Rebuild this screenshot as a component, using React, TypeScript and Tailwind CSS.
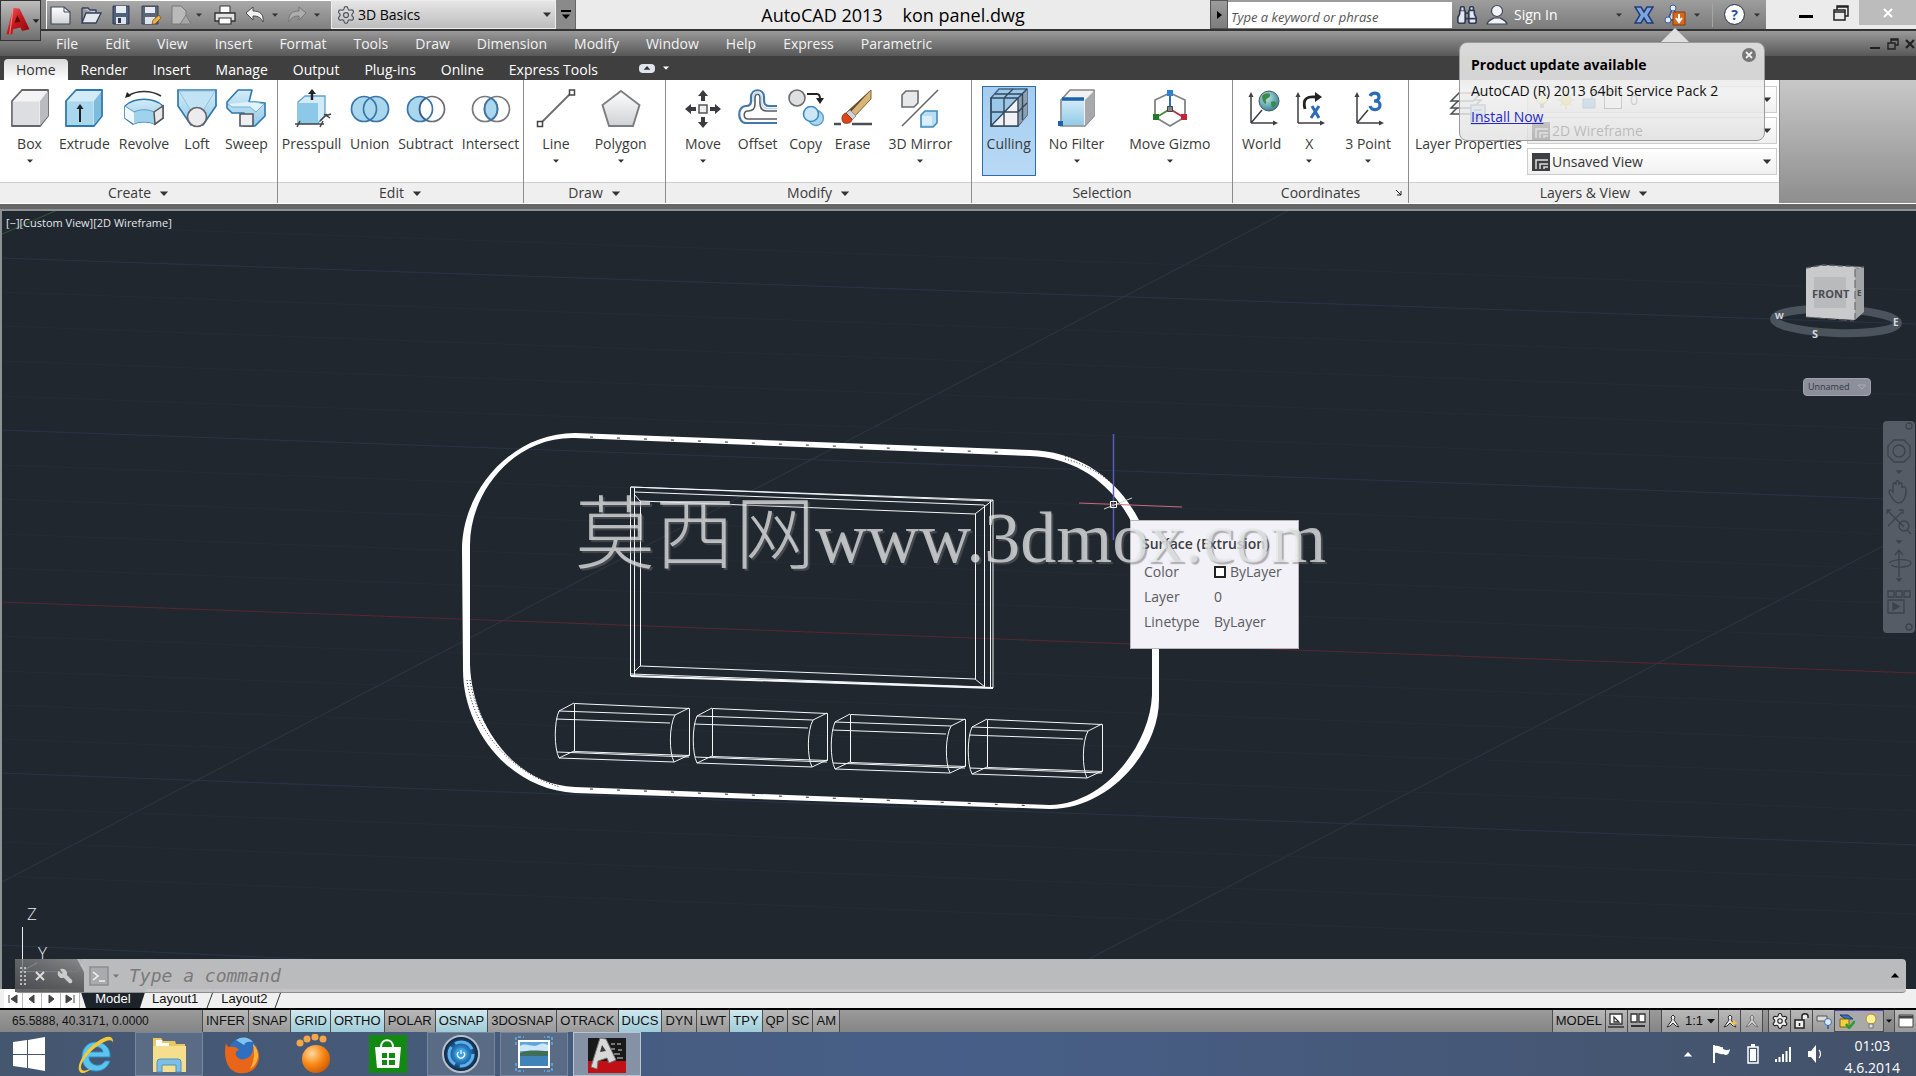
import React from "react";
import { Binoculars, Settings, Wrench } from "lucide-react";

type IconProps = { children: React.ReactNode; size?: string; box?: string };

function Svg({ children, size = "size-10", box = "0 0 40 40" }: IconProps) {
  return (
    <svg viewBox={box} className={`${size} shrink-0`} fill="none" aria-hidden="true">
      {children}
    </svg>
  );
}

function SharedGradients() {
  return (
    <svg className="absolute size-0" aria-hidden="true">
      <defs>
        <linearGradient id="gray" x1="0" y1="0" x2="0" y2="1">
          <stop offset="0" stopColor="#ffffff" />
          <stop offset="1" stopColor="#cfd1d4" />
        </linearGradient>
        <linearGradient id="blue" x1="0" y1="0" x2="0" y2="1">
          <stop offset="0" stopColor="#d3ebf7" />
          <stop offset="1" stopColor="#93cbe8" />
        </linearGradient>
        <linearGradient id="red" x1="0" y1="0" x2="1" y2="1">
          <stop offset="0" stopColor="#f0686a" />
          <stop offset="0.5" stopColor="#c6161c" />
          <stop offset="1" stopColor="#7d0b0e" />
        </linearGradient>
        <radialGradient id="globe" cx="0.4" cy="0.35" r="0.7">
          <stop offset="0" stopColor="#bfe6e4" />
          <stop offset="1" stopColor="#2f7f92" />
        </radialGradient>
        <radialGradient id="orange" cx="0.35" cy="0.3" r="0.8">
          <stop offset="0" stopColor="#ffd9a0" />
          <stop offset="0.5" stopColor="#f98a17" />
          <stop offset="1" stopColor="#c95300" />
        </radialGradient>
        <radialGradient id="lens" cx="0.5" cy="0.5" r="0.5">
          <stop offset="0" stopColor="#4cc0ff" />
          <stop offset="0.6" stopColor="#1c5f9e" />
          <stop offset="1" stopColor="#0b1c30" />
        </radialGradient>
      </defs>
    </svg>
  );
}

function Down({ className = "" }: { className?: string }) {
  return (
    <svg viewBox="0 0 10 6" className={`shrink-0 fill-current ${className}`} aria-hidden="true">
      <path d="M0 0.5h10L5 6z" />
    </svg>
  );
}

/* ---------- ribbon icons ---------- */

const axes = (
  <g stroke="#3c3f43" strokeWidth="1.5">
    <path d="M9 35V6M9 35h25M9 35 20 22" />
    <path d="M6.500 9 9 4l2.500 5zM31 32.500 36 35l-5 2.500z" fill="#3c3f43" stroke="none" />
  </g>
);

const icons = {
  box: (
    <Svg>
      <path d="M2 13 12 2h26v26L30 38H2z" fill="#f4f4f5" stroke="#63656a" strokeWidth="1.800" strokeLinejoin="round" />
      <path d="M2.800 13.500H29.500V37H2.800z" fill="#dddee2" />
      <path d="M30 13 38 3v25l-8 9.500z" fill="#b9bbc1" />
    </Svg>
  ),
  extrude: (
    <Svg>
      <path d="M2 13 12 2h26v26L30 38H2z" fill="#d3ebf7" stroke="#2d78ad" strokeWidth="1.800" strokeLinejoin="round" />
      <path d="M3 13.500h26.500V37H3z" fill="#a9d7ee" />
      <path d="M30 13 37 4v24l-7 8.500z" fill="#7fbbdc" />
      <path d="M16 34V18" stroke="#222" strokeWidth="2" />
      <path d="m12.500 21 3.500-5 3.500 5z" fill="#222" />
    </Svg>
  ),
  revolve: (
    <Svg>
      <path d="M4 8C13 2 27 2 37 8" stroke="#333" strokeWidth="1.600" />
      <path d="M1 10 3 4l4 4z" fill="#222" />
      <path d="M1 18C10 9 30 9 39 18v12l-8 6c-6-3-16-3-22 0l-8-6z" fill="url(#blue)" stroke="#2d78ad" strokeWidth="1.500" />
      <path d="M1 18l9 6c6-3 14-3 20 0v12c-6-3-14-3-20 0V24z" fill="#9fd2ec" />
      <path d="M1 18l9 6v12l-9-6z" fill="#f1f8fc" />
      <path d="M1 18l9 6c6-3 14-3 20 0" stroke="#5b9cc6" />
      <path d="m30 24 9-6v12l-8 6z" fill="#e9e9eb" stroke="#555" strokeWidth="1.500" />
    </Svg>
  ),
  loft: (
    <Svg>
      <path d="M1 2h38v16L26 37H14L1 18z" fill="url(#blue)" stroke="#2d78ad" strokeWidth="1.700" />
      <path d="m2 3 12 20h12L38 3z" fill="#c2e3f3" stroke="#8fc3df" />
      <circle cx="20" cy="29" r="9.500" fill="#ececee" stroke="#63656a" strokeWidth="1.700" />
    </Svg>
  ),
  sweep: (
    <Svg>
      <path d="M1 14 12 2h14l-3 12h6l10 1v13l-10 10H18V25H6l-5-5z" fill="url(#blue)" stroke="#2d78ad" strokeWidth="1.600" strokeLinejoin="round" />
      <path d="m2 16 4 3h18l6 5 8-8-8-2h-7" fill="#e1f2fa" stroke="#6fb2d6" />
      <path d="M14 26h13v12H14z" fill="#efeff1" stroke="#55575b" strokeWidth="1.600" />
    </Svg>
  ),
  presspull: (
    <Svg>
      <path d="M6 14 13 8h20v20l-7 7H6z" fill="#d3ebf7" stroke="#5fa3cb" strokeWidth="1.300" />
      <path d="M6 15h20v20H6z" fill="#8cc8e7" />
      <path d="M20 12V4" stroke="#222" strokeWidth="2.500" />
      <path d="m16 6 4-5 4 5z" fill="#222" />
      <path d="M3 36h29M5 39l3-6M28 39l3-6M28 33l7-7M33 28l6-2M32 26l6 4" stroke="#444" strokeWidth="1.500" />
    </Svg>
  ),
  union: (
    <Svg>
      <circle cx="14" cy="21" r="12.500" fill="#a9d7ee" />
      <circle cx="26" cy="21" r="12.500" fill="#a9d7ee" />
      <g stroke="#3b76ab" strokeWidth="1.700"><circle cx="14" cy="21" r="12.500" /><circle cx="26" cy="21" r="12.500" /></g>
    </Svg>
  ),
  subtract: (
    <Svg>
      <circle cx="26" cy="21" r="12.500" fill="#fff" stroke="#6b6d72" strokeWidth="1.700" />
      <path d="M20 10a12.500 12.500 0 1 0 0 22 12.500 12.500 0 0 1 0-22" fill="#a9d7ee" />
      <circle cx="14" cy="21" r="12.500" stroke="#3b76ab" strokeWidth="1.700" />
      <path d="M20 10a12.500 12.500 0 0 0 0 22" stroke="#3b5f8b" strokeWidth="1.700" />
    </Svg>
  ),
  intersect: (
    <Svg>
      <path d="M20 10a12.500 12.500 0 0 1 0 22 12.500 12.500 0 0 1 0-22" fill="#a9d7ee" />
      <g stroke="#77797d" strokeWidth="1.700"><circle cx="14" cy="21" r="12.500" /><circle cx="26" cy="21" r="12.500" /></g>
      <path d="M20 10a12.500 12.500 0 0 1 0 22 12.500 12.500 0 0 1 0-22" stroke="#3b76ab" strokeWidth="1.700" />
    </Svg>
  ),
  line: (
    <Svg>
      <path d="M4 36 35 5" stroke="#6a6c70" strokeWidth="1.800" />
      <path d="M1.500 33.500h5v5h-5zM33.500 2h5v5h-5z" fill="#fff" stroke="#444" strokeWidth="1.500" />
    </Svg>
  ),
  polygon: (
    <Svg><path d="M20 3 38.500 17 32 38H8L1.500 17z" fill="url(#gray)" stroke="#7b7d81" strokeWidth="1.900" /></Svg>
  ),
  move: (
    <Svg>
      <path d="M16 17h8v8h-8z" fill="#eee" stroke="#555" strokeWidth="1.500" />
      <path d="m20 2-5 6h3v5h4V8h3zM20 40l-5-6h3v-5h4v5h3zM2 21l6-5v3h5v4H8v3zM38 21l-6-5v3h-5v4h5v3z" fill="#3a3c40" />
    </Svg>
  ),
  offset: (
    <Svg>
      <path d="M39 18h-8c-4 0-5-2-5-6V9c0-9-13-9-13 0v4c0 4-2 5-5 5-9 0-9 17 0 17h31" stroke="#4577a8" strokeWidth="2.200" />
      <path d="M39 23H29c-5 0-7-3-7-8V10c0-5-5-5-5 0v6c0 5-3 7-7 7-5 0-5 8 0 8h29" stroke="#5a5c60" strokeWidth="1.600" />
      <path d="M39 20.500h-9c-5 0-6.500-3-6.500-7V10c0-7-8.500-7-8.500 0v4" stroke="#bcdcf1" strokeWidth="1.500" />
    </Svg>
  ),
  copy: (
    <Svg>
      <circle cx="11" cy="10" r="8" fill="#dedfe1" stroke="#6a6c70" strokeWidth="1.600" />
      <path d="M21 6h10q3 0 3 5" stroke="#222" strokeWidth="2" />
      <path d="m30 10 8 0-4 6z" fill="#222" />
      <circle cx="30" cy="30" r="7.500" fill="#a9d7ee" stroke="#5b9bc9" strokeWidth="1.300" />
      <circle cx="25" cy="26" r="7.500" fill="#cbe7f5" stroke="#3f8ac1" strokeWidth="1.600" />
    </Svg>
  ),
  erase: (
    <Svg>
      <path d="M38 2v9L19 31l-6-6z" fill="#d9b678" stroke="#7d6237" />
      <path d="M38 2 13 25l2 2z" fill="#5f4a2a" />
      <path d="m17 22 6 6-4 4-6-7z" fill="#cfd2d6" stroke="#77797d" strokeWidth="0.700" />
      <path d="M13 25c-5 1-5 8-2 10 4 1 8 0 8-4z" fill="#d9481c" stroke="#872706" strokeWidth="0.800" />
      <path d="M1 36h7M19 36h20" stroke="#4d4f53" strokeWidth="2.400" />
    </Svg>
  ),
  mirror: (
    <Svg>
      <path d="m2 7 4-4h12v12l-4 4H2z" fill="#e7e8ea" stroke="#6a6c70" strokeWidth="1.600" />
      <path d="M2 38 38 2" stroke="#66686c" strokeWidth="1.600" />
      <path d="m21 27 4-4h12v12l-4 4H21z" fill="#b9def2" stroke="#3f8ac1" strokeWidth="1.600" />
      <path d="M22 28h10v9H22z" fill="#dbeffa" />
    </Svg>
  ),
  culling: (
    <Svg>
      <path d="M2 10 10 1h28v26l-9 11H2z" fill="#9ac8e6" stroke="#44627f" strokeWidth="1.500" />
      <path d="M2 38 29 10v28z" fill="#f2f2f4" />
      <path d="M29 10 38 1v26l-9 11z" fill="#8ea0b0" />
      <path d="M2 10h27v28H2zM15 10v28M2 24h27M29 10l9-9M15 10l9-9M6 6h28M33.500 6v26M29 24l9-9M2 38l27-28" stroke="#33485d" strokeWidth="1.400" />
    </Svg>
  ),
  filter: (
    <Svg>
      <path d="M4 12 13 2h24v26l-9 10H4z" fill="#f2f2f3" stroke="#85878b" strokeWidth="1.600" />
      <path d="m28 12 9-9v25l-9 10z" fill="#a7a9ad" />
      <path d="M5 12h22v25H5z" fill="url(#blue)" />
      <path d="M5 11h22" stroke="#1d62ad" strokeWidth="3.500" />
      <path d="M1 33h5v5H1z" fill="#1d62ad" />
    </Svg>
  ),
  gizmo: (
    <Svg>
      <path d="M20 5 35 12v17l-15 9L5 29V12z" stroke="#808286" strokeWidth="1.800" />
      <path d="M20 6v15" stroke="#2a6db5" strokeWidth="2" />
      <path d="M20 21 7 29" stroke="#4a8a3c" strokeWidth="2" />
      <path d="m20 21 13 8" stroke="#b9303c" strokeWidth="2" />
      <path d="M17.500 18.500h5v5h-5z" fill="#888" stroke="#444" />
      <path d="M17 2h6v6h-6z" fill="#2f80cf" /><path d="M3 26h6v6H3z" fill="#1f7a2a" /><path d="M31 26h6v6h-6z" fill="#c4243a" />
    </Svg>
  ),
  world: (
    <Svg>
      {axes}
      <circle cx="27" cy="13" r="10" fill="url(#globe)" stroke="#4c5b63" />
      <path d="M20 8c4-4 9-3 8 0s-5 2-4 6-4 1-4-6M29 14c4-2 7 0 4 4s-4-1-4-4" fill="#3c8a4a" />
    </Svg>
  ),
  x: (
    <Svg>
      <g stroke="#3c3f43" strokeWidth="1.500"><path d="M9 35V6M9 35h25" /><path d="M6.500 9 9 4l2.500 5zM31 32.500 36 35l-5 2.500z" fill="#3c3f43" stroke="none" /></g>
      <path d="M16 21c-3-11 3-13 11-12" stroke="#222" strokeWidth="2.800" />
      <path d="m26 4 7 5-7 5z" fill="#222" />
      <path d="m23 18 7 12M30 18l-8 12" stroke="#2a6db5" strokeWidth="3" />
    </Svg>
  ),
  point3: (
    <Svg>
      {axes}
      <path d="M22 8c2-4 9-4 9 1 0 4-4 4-5 4 2 0 6 0 6 4 0 6-9 6-10 1" stroke="#2a6db5" strokeWidth="3.200" />
    </Svg>
  ),
  layers: (
    <Svg>
      <g fill="#f4f4f5" stroke="#4d4f53" strokeWidth="1.500">
        <path d="m2 26 8-8h22l-8 8z" /><path d="m2 20 8-8h22l-8 8z" /><path d="m2 13 8-8h22l-8 8z" />
      </g>
      <path d="M22 17h14v19H22z" fill="#cfe0ee" stroke="#4577a8" strokeWidth="1.500" />
      <path d="M25 22h8M25 26h8M25 30h8" stroke="#4577a8" strokeWidth="1.500" />
    </Svg>
  ),
};

/* ---------- quick access ---------- */

const qat = {
  new: <Svg size="size-[22px]" box="0 0 22 22"><path d="M1 3h13l6 5v12H1z" fill="url(#gray)" stroke="#3f4b5c" strokeWidth="1.200" /><path d="M14 3v5h6" stroke="#3f4b5c" /></Svg>,
  open: <Svg size="size-[22px]" box="0 0 22 22"><path d="M2 4h6l2 2h6v4" fill="#c7ccd6" stroke="#34415a" strokeWidth="1.300" /><path d="M2 19V4M2 19 6 9h15l-5 10z" fill="#e5e8ee" stroke="#34415a" strokeWidth="1.300" /></Svg>,
  save: <Svg size="size-[22px]" box="0 0 22 22"><path d="M3 2h16v18H3z" fill="#4f5f7c" stroke="#2d3950" /><path d="M6 2h10v7H6z" fill="#e8ebf1" /><path d="M6 13h10v7H6z" fill="#dfe3ea" /><path d="M8 14h3v5H8z" fill="#2d3950" /></Svg>,
  saveAs: <Svg size="size-[22px]" box="0 0 22 22"><path d="M2 2h16v18H2z" fill="#5b6578" stroke="#3a4150" /><path d="M5 3h10v6H5z" fill="#e8ebf1" /><path d="M5 13h10v7H5z" fill="#dfe3ea" /><path d="m12 20 1-4 6-5 2 3-6 6z" fill="#eab04a" stroke="#7b531a" strokeWidth="0.800" /></Svg>,
  page: <Svg size="size-[22px]" box="0 0 22 22"><path d="M2 2h9l5 5v13H2z" fill="#b9b9b9" stroke="#787878" /><path d="m10 20 6-9 5 9z" fill="#a7a7a7" stroke="#7c7c7c" /></Svg>,
  print: <Svg size="size-[22px]" box="0 0 22 22"><path d="M6 2h10v7H6z" fill="#fff" stroke="#333" /><path d="M1 9h20v8H1z" fill="#e3e3e3" stroke="#333" strokeWidth="1.400" /><path d="M5 14h12v6H5z" fill="#fff" stroke="#333" strokeWidth="1.200" /></Svg>,
  undo: <Svg size="size-[22px]" box="0 0 22 22"><path d="m2 9 7-6v4c7 0 11 3 10 11-2-4-4-6-10-6v4z" fill="#f1f1f1" stroke="#4a4a4a" /></Svg>,
  redo: <Svg size="size-[22px]" box="0 0 22 22"><path d="m20 9-7-6v4C6 7 2 10 3 18c2-4 4-6 10-6v4z" fill="#adadad" stroke="#777" /></Svg>,
};

function TitleBar() {
  return (
    <header className="relative flex h-[31px] items-stretch border-b-2 border-[#333] bg-[#ebebeb]">
      <button aria-label="Application menu" className="absolute left-0 top-0 z-10 flex h-[41px] w-[41px] items-center border border-[#333] bg-linear-to-b from-[#bdbdbd] to-[#6f6f6f] pl-[3px] text-[#222]">
        <Svg size="size-7" box="0 0 30 34">
          <path d="M1 33 9 1l8 1 12 25-9 2-2-4-9 2-1 6z" fill="url(#red)" />
          <path d="m11 19 3-9 4 8z" fill="#5e0709" /><path d="M9 1 5 33" stroke="#ff9c9c" strokeWidth="1" />
        </Svg>
        <Down className="h-1 w-2" />
      </button>
      <div className="flex w-[331px] items-center bg-linear-to-b from-[#8f8f8f] to-[#7e7e7e] pl-[46px] text-[#333]">
        <div className="flex h-full flex-1 items-center gap-2 border-l border-t border-white bg-linear-to-b from-[#a9a9a9] to-[#808080] pl-[3px]">
          <button aria-label="New">{qat.new}</button>
          <button aria-label="Open">{qat.open}</button>
          <button aria-label="Save">{qat.save}</button>
          <button aria-label="Save As">{qat.saveAs}</button>
          <button aria-label="Page setup" className="flex items-center gap-1">{qat.page}<Down className="h-1 w-1.5" /></button>
          <button aria-label="Plot" className="ml-1">{qat.print}</button>
          <button aria-label="Undo" className="flex items-center gap-1.5">{qat.undo}<Down className="h-1 w-1.5" /></button>
          <button aria-label="Redo" className="flex items-center gap-1.5">{qat.redo}<Down className="h-1 w-1.5" /></button>
        </div>
      </div>
      <div className="relative flex w-[225px] items-center border border-[#eee] bg-linear-to-b from-[#e6e6e6] to-[#bdbdbd]">
        <Settings className="absolute left-1 size-5 text-[#55585c]" strokeWidth={1.500} aria-hidden="true" />
        <select aria-label="Workspace" className="h-full w-full appearance-none bg-transparent pl-[26px] text-sm text-black">
          <option>3D Basics</option>
        </select>
        <Down className="absolute right-1 h-[5px] w-2 text-[#333]" />
      </div>
      <button aria-label="Customize quick access" className="flex w-[20px] flex-col items-center justify-center gap-0.5 border-r border-[#666] bg-[#8a8a8a] text-black">
        <span className="h-0.5 w-2.5 bg-black" />
        <Down className="h-[5px] w-2.5" />
      </button>
      <h1 className="flex flex-1 justify-center gap-5 text-lg leading-[30px] whitespace-nowrap text-black">
        <span>AutoCAD 2013</span>
        <span>kon panel.dwg</span>
      </h1>
      <div className="flex w-[556px] shrink-0 items-center bg-linear-to-b from-[#9d9d9d] to-[#7c7c7c] text-[#333]">
        <button aria-label="Collapse search" className="flex h-full w-[18px] items-center justify-center border border-[#555] text-black">
          <svg viewBox="0 0 5 8" className="h-2 w-[5px]"><path d="M0 0v8l5-4z" /></svg>
        </button>
        <input aria-label="Search" placeholder="Type a keyword or phrase" className="h-[26px] w-[224px] shrink-0 bg-white px-[3px] pt-1 text-[13px] italic placeholder:text-[#555]" />
        <button aria-label="Search help" className="ml-1"><Binoculars className="size-[22px] fill-[#e4e8f0] text-[#2f3b55]" strokeWidth={1.800} /></button>
        <button className="ml-2 flex flex-1 items-center text-white">
          <Svg size="size-[22px]" box="0 0 22 22"><circle cx="11" cy="7" r="5.500" fill="#f1f3f7" stroke="#3d4658" strokeWidth="1.200" /><path d="M1 20c1-4 4-4 7-6h6c3 2 6 2 7 6z" fill="#f1f3f7" stroke="#3d4658" strokeWidth="1.200" /></Svg>
          <span className="ml-1.5 flex-1 text-left text-sm whitespace-nowrap">Sign In</span>
          <Down className="h-1 w-1.5 text-[#333]" />
        </button>
        <button aria-label="Exchange Apps" className="ml-3"><Svg size="size-5" box="0 0 20 20"><path d="M1 2h6l3 5 3-5h6l-5 8 5 8h-6l-3-5-3 5H1l5-8z" fill="#7ea6dc" stroke="#1f3d78" strokeWidth="1.500" /></Svg></button>
        <button aria-label="Stay connected" className="ml-2.5 flex items-center gap-2">
          <Svg size="size-[22px]" box="0 0 22 22"><path d="M9 3 4 16h10z" stroke="#3d5f98" strokeWidth="1.800" fill="#cdd9ee" /><circle cx="9" cy="4" r="3" fill="#e2eaf7" stroke="#3d5f98" /><circle cx="4" cy="16" r="3" fill="#e2eaf7" stroke="#3d5f98" /><path d="M9 8h12v13H9z" fill="#d9681c" stroke="#8b3a07" /><path d="M15 10v7M12 14l3 4 3-4" stroke="#fff" strokeWidth="2" /></Svg>
          <Down className="h-1 w-1.5" />
        </button>
        <span className="ml-3 h-6 w-px bg-[#a5a5a5]" />
        <button aria-label="Help" className="ml-3 mr-1.5 flex items-center gap-2.5">
          <span className="flex size-[19px] items-center justify-center rounded-full bg-white text-sm font-bold text-[#24509e] outline-1 outline-[#33415c]">?</span>
          <Down className="h-1 w-1.5" />
        </button>
      </div>
      <div className="flex w-[150px] shrink-0">
        <span className="ml-auto mr-5 flex items-center pt-1"><svg viewBox="0 0 14 3" className="h-[3px] w-3.5"><path d="M0 0h14v3H0z" /></svg></span>
        <button aria-label="Restore" className="mr-2.5 pb-1">
          <Svg size="size-4" box="0 0 16 16"><path d="M1 5h11v10H1zM1 7h11M4 5V1h11v10h-3M4 2h11" stroke="#222" strokeWidth="1.500" /></Svg>
        </button>
        <button aria-label="Close" className="flex h-[25px] w-[57px] items-center justify-center bg-[#bcbcbc]"><Svg size="size-2.5" box="0 0 10 10"><path d="m1 1 8 8M9 1 1 9" stroke="#fff" strokeWidth="2" /></Svg></button>
      </div>
      <UpdateBalloon />
    </header>
  );
}

function UpdateBalloon() {
  return (
    <aside className="absolute right-[151px] top-[28px] z-20 w-[306px]" aria-label="Product update">
      <div className="ml-[202px] h-[14px] w-7 bg-[#dfdfdf] [clip-path:polygon(50%_0,100%_100%,0_100%)]" />
      <div className="relative h-[99px] rounded-lg border border-[#9a9a9a] bg-linear-to-b from-[#dedede]/95 via-[#efefef]/85 to-[#e0e0e0]/75 px-[11px] pt-[11px] text-sm leading-[26px] text-[#111]">
        <p className="mb-0.5 leading-[22px] font-bold text-black">Product update available</p>
        <p>AutoCAD (R) 2013 64bit Service Pack 2</p>
        <a href="#install" className="text-[#2626c8] underline">Install Now</a>
        <button aria-label="Dismiss" className="absolute right-2 top-[5px]"><Svg size="size-3.5" box="0 0 14 14"><circle cx="7" cy="7" r="7" fill="#777" /><path d="m4 4 6 6M10 4l-6 6" stroke="#eee" strokeWidth="1.800" /></Svg></button>
      </div>
    </aside>
  );
}

const menus = ["File", "Edit", "View", "Insert", "Format", "Tools", "Draw", "Dimension", "Modify", "Window", "Help", "Express", "Parametric"];
const tabs = ["Home", "Render", "Insert", "Manage", "Output", "Plug-ins", "Online", "Express Tools"];

function MenuBar() {
  return (
    <nav className="flex h-[25px] items-center gap-px bg-linear-to-b from-[#9a9a9a] to-[#585858] pl-[43px]">
      {menus.map((m) => (
        <button key={m} className="px-[13px] text-sm leading-6 text-[#f2f2f2]">{m}</button>
      ))}
      <div className="ml-auto flex items-center gap-1.5 pr-px">
        <Svg size="size-3" box="0 0 12 12"><path d="M1 10h10" stroke="#222" strokeWidth="2" /></Svg>
        <Svg size="size-3" box="0 0 12 12"><path d="M1 5h7v6H1zM4 5V1h7v6H8M4 2h7" stroke="#222" strokeWidth="1.400" /></Svg>
        <Svg size="size-2.5" box="0 0 10 10"><path d="m1 1 8 8M9 1 1 9" stroke="#222" strokeWidth="2.200" /></Svg>
      </div>
    </nav>
  );
}

function TabBar() {
  return (
    <div className="flex h-6 items-end gap-px bg-[#3f3f3f] pl-1" role="tablist">
      {tabs.map((t) => (
        <button
          key={t}
          role="tab"
          aria-selected={t === "Home"}
          className={t === "Home" ? "h-[21px] rounded-t-sm bg-linear-to-b from-[#dadada] to-white px-3 text-sm leading-[21px] text-[#333]" : "h-[21px] px-3 text-sm leading-[21px] text-white"}
        >
          {t}
        </button>
      ))}
      <button aria-label="Minimize ribbon" className="ml-7 flex items-center gap-2 self-center text-white">
        <span className="flex h-[9px] w-4 items-center justify-center rounded-sm bg-[#dfe4ee]"><Down className="h-1 w-2 rotate-180 text-[#333]" /></span>
        <Down className="h-1 w-1.5" />
      </button>
    </div>
  );
}

type Tool = { label: string; icon: React.ReactNode; menu?: boolean; active?: boolean };

function ToolButton({ label, icon, menu, active }: Tool) {
  const tone = active ? "border-x border-[#2f6ea8] bg-linear-to-b from-[#a5cdf0] to-[#b7d9f5]" : "border-transparent";
  return (
    <button className={`flex h-[90px] min-w-[46px] flex-col items-center border-y pt-px text-sm leading-[18px] whitespace-nowrap text-[#3a3a3a] ${tone}`}>
      {icon}
      <span className={menu ? "mt-[7px] px-3" : "mt-[7px] px-1"}>{label}</span>
      {menu && <Down className="mt-1.5 h-1 w-1.5 text-[#333]" />}
    </button>
  );
}

type PanelProps = { title: string; width: string; arrow?: boolean; launcher?: boolean; children: React.ReactNode };

function Panel({ title, width, arrow, launcher, children }: PanelProps) {
  return (
    <section className={`flex h-full shrink-0 flex-col border-r border-[#8c8c8c] bg-white ${width}`}>
      <div className="flex flex-1 justify-center gap-px pt-1.5">{children}</div>
      <h2 className="relative flex h-[21px] items-center justify-center gap-2 border-t border-[#cfcfcf] bg-[#efefef] text-sm text-[#3a3a3a]">
        {title}
        {arrow && <Down className="h-[5px] w-2.5 text-[#333]" />}
        {launcher && (
          <svg viewBox="0 0 6 6" className="absolute right-1.5 size-1.5 stroke-[#222]" fill="none"><path d="m0 0 5 5M5 1v4H1" /></svg>
        )}
      </h2>
    </section>
  );
}

const panels: { title: string; width: string; arrow?: boolean; launcher?: boolean; tools: Tool[] }[] = [
  { title: "Create", width: "w-[278px]", arrow: true, tools: [
    { label: "Box", icon: icons.box, menu: true }, { label: "Extrude", icon: icons.extrude }, { label: "Revolve", icon: icons.revolve }, { label: "Loft", icon: icons.loft }, { label: "Sweep", icon: icons.sweep } ] },
  { title: "Edit", width: "w-[246px]", arrow: true, tools: [
    { label: "Presspull", icon: icons.presspull }, { label: "Union", icon: icons.union }, { label: "Subtract", icon: icons.subtract }, { label: "Intersect", icon: icons.intersect } ] },
  { title: "Draw", width: "w-[142px]", arrow: true, tools: [
    { label: "Line", icon: icons.line, menu: true }, { label: "Polygon", icon: icons.polygon, menu: true } ] },
  { title: "Modify", width: "w-[306px]", arrow: true, tools: [
    { label: "Move", icon: icons.move, menu: true }, { label: "Offset", icon: icons.offset }, { label: "Copy", icon: icons.copy }, { label: "Erase", icon: icons.erase }, { label: "3D Mirror", icon: icons.mirror, menu: true } ] },
  { title: "Selection", width: "w-[261px]", tools: [
    { label: "Culling", icon: icons.culling, active: true }, { label: "No Filter", icon: icons.filter, menu: true }, { label: "Move Gizmo", icon: icons.gizmo, menu: true } ] },
  { title: "Coordinates", width: "w-[176px]", launcher: true, tools: [
    { label: "World", icon: icons.world }, { label: "X", icon: icons.x, menu: true }, { label: "3 Point", icon: icons.point3, menu: true } ] },
];

function RibbonSelect({ label, value, adornment, pad }: { label: string; value: string; adornment: React.ReactNode; pad: string }) {
  return (
    <div className="relative flex h-[27px] items-center border border-[#cdcdcd] bg-linear-to-b from-white to-[#f0f0f0]">
      <span className="absolute left-1 flex items-center gap-1">{adornment}</span>
      <select aria-label={label} className={`h-full w-full appearance-none bg-transparent text-sm text-[#333] ${pad}`}>
        <option>{value}</option>
      </select>
      <Down className="absolute right-1 h-[5px] w-2.5 text-[#333]" />
    </div>
  );
}

const styleSwatch = <Svg size="size-[18px]" box="0 0 18 18"><path d="M0 0h18v18H0z" fill="#3d3f43" /><path d="M4 16V7h12M8 16v-5h8M12 16v-2h4" stroke="#ddd" strokeWidth="1.500" /></Svg>;

function Ribbon() {
  return (
    <div className="flex h-[123px] overflow-hidden bg-linear-to-b from-[#c8c8c8] to-[#8e8e8e]">
      {panels.map(({ tools, ...p }) => (
        <Panel key={p.title} {...p}>{tools.map((t) => <ToolButton key={t.label} {...t} />)}</Panel>
      ))}
      <Panel title="Layers & View" width="w-[371px]" arrow>
        <ToolButton label="Layer Properties" icon={icons.layers} />
        <div className="flex w-[250px] flex-col gap-1">
          <RibbonSelect
            label="Layer"
            value="0"
            pad="pl-[102px]"
            adornment={
              <>
                <Svg size="size-5" box="0 0 20 20"><circle cx="10" cy="8" r="6" fill="#fff3a0" stroke="#a58b1e" /><path d="M8 14h4v4H8z" fill="#888" /></Svg>
                <Svg size="size-5" box="0 0 20 20"><circle cx="10" cy="10" r="5" fill="#ffd94a" stroke="#c99a13" /><path d="M10 1v3M10 16v3M1 10h3M16 10h3M4 4l2 2M14 14l2 2M16 4l-2 2M4 16l2-2" stroke="#c99a13" /></Svg>
                <Svg size="size-5" box="0 0 20 20"><path d="M3 9h12v9H3z" fill="#5aa0d8" stroke="#2a5f93" /><path d="M12 9V5c0-4 6-4 6 0" stroke="#2a5f93" strokeWidth="1.500" /></Svg>
                <span className="size-[18px] border border-[#333] bg-white" />
              </>
            }
          />
          <RibbonSelect label="Visual style" value="2D Wireframe" pad="pl-[24px]" adornment={styleSwatch} />
          <RibbonSelect label="View" value="Unsaved View" pad="pl-[24px]" adornment={styleSwatch} />
        </div>
      </Panel>
    </div>
  );
}

/* ---------- drawing area ---------- */

const keyOffsets = [[0, 0], [138, 5], [276, 11], [413, 16]];

function Drawing() {
  return (
    <svg viewBox="2 211 1914 778" preserveAspectRatio="xMinYMin slice" className="absolute inset-0 h-full w-full" fill="none" aria-label="Wireframe model of a panel">
      <g stroke="#2a3448" strokeWidth="1">
        <path d="M0 258 1916 324M0 430 1916 500M0 773 1916 845M0 945 370 962" />
        <path d="M0 883 1290 210M1089 959 1916 529" stroke="#2d3842" />
      </g>
      <g stroke="#232c36" strokeWidth="1">
        <path d="M0 292 1916 360M0 326 1916 395M0 361 1916 430M0 396 1916 465M0 465 1916 535M0 499 1916 570M0 534 1916 604M0 568 1916 639M0 636 1916 707M0 671 1916 742M0 705 1916 776M0 739 1916 811M0 808 1916 880M0 842 1916 914M0 876 1916 948M0 224 1916 290" />
      </g>
      <path d="M0 235 62 208" stroke="#2f5a35" />
      <path d="M0 602 1916 673" stroke="#5a2733" />

      <path
        fill="#fff"
        fillRule="evenodd"
        d="M575 433 1030 450C1105 452 1159 515 1159 610V700C1159 750 1110 809 1050 809L575 793C510 790 463 730 463 670L462 550C462 490 512 433 575 433ZM575 438C516 436 470 490 470 545V665C472 725 515 785 575 787L1050 805C1105 804 1150 745 1152 695V600C1146 510 1095 458 1030 456Z"
      />
      <g stroke="#20272f" strokeWidth="1" strokeDasharray="1 2">
        <path d="M1065 456C1105 466 1130 490 1147 522M1065 459C1103 469 1127 493 1144 524" />
        <path d="M467 680C474 730 510 772 560 787M470 680C477 727 512 768 560 784" />
      </g>
      <path d="M590 437 1020 453M590 789 1040 806" stroke="#20272f" strokeDasharray="3 24" />

      <g stroke="#f4f6f8" strokeWidth="1">
        <path d="M630.500 487 993 500V688L630.500 676ZM634.500 488V676M640.500 501V666M634 492 984 505M640 501 975 514M640 666 975 679M631 674 985 687M990.500 500V688M984.500 505V687M975.500 514V679M634 494l6 7M634 672l6-6M993 500l-18 14M975 679l10 8M631 487 991 501" />
        <path d="M631 676 993 688" strokeWidth="2" />
        {keyOffsets.map(([x, y]) => (
          <g key={x} transform={`translate(${x} ${y})`}>
            <path d="M574.500 703.500 689.500 708.500V755.500L574.500 751.500ZM559 711 675 715M556 719 670 723M557 752 689 757M559 758 674 762M559 711l15-8M675 715l14-7M559 758l15-7M674 762l15-7" />
            <path d="M559 711C554 722 554 748 559 758M675 715C669 726 669 752 674 762" />
          </g>
        ))}
      </g>

      <path d="M1113.500 434V540" stroke="#5a5bb8" strokeWidth="1.500" />
      <path d="M1079 503 1182 507" stroke="#c9687a" strokeWidth="1.200" />
      <path d="M1104 509 1132 498" stroke="#cfd8c8" />
      <path d="M1110.500 501.500h6v6h-6z" stroke="#fff" />

      <g fill="#e9edf0" className="font-['Open_Sans',sans-serif] font-light" fontSize="17">
        <text x="27" y="920">Z</text>
        <text x="38" y="959">Y</text>
        <text x="77" y="971">X</text>
      </g>
      <path d="M22.500 927V971.500H78M22 971 37 963" stroke="#e9edf0" />
    </svg>
  );
}

function Watermark() {
  return (
    <p className="pointer-events-none absolute left-[573px] top-[261px] z-10 flex items-baseline text-[80px] leading-[110px] whitespace-nowrap text-[#e6e8ea]/75 [text-shadow:2px_2px_1px_rgb(110_110_110/0.5)]">
      <span className="font-['Noto_Sans_CJK_SC',sans-serif] font-light">莫西网</span>
      <span className="font-['Liberation_Serif',serif] text-[72px]">www.3dmox.com</span>
    </p>
  );
}

function Tooltip() {
  return (
    <div role="tooltip" className="absolute left-[1128px] top-[309px] w-[169px] border border-[#b5b5bd] bg-[#f1f1f7] px-[11px] pt-2.5 pb-[14px] text-sm text-[#5b5b60]">
      <p className="leading-[26px] font-semibold whitespace-nowrap text-[#3d3d42]">Surface (Extrusion)</p>
      <dl className="mt-0.5 grid grid-cols-[70px_1fr] pl-0.5 leading-[25px]">
        <dt>Color</dt>
        <dd className="flex items-center gap-1"><span className="size-3 border-2 border-[#222] bg-white" />ByLayer</dd>
        <dt>Layer</dt><dd>0</dd>
        <dt>Linetype</dt><dd>ByLayer</dd>
      </dl>
    </div>
  );
}

function ViewCube() {
  return (
    <div className="absolute right-2.5 top-[51px] flex w-[138px] flex-col items-center">
      <svg viewBox="1768 262 138 80" className="h-20 w-[138px]" fill="none" aria-label="View cube, front">
        <ellipse cx="1836" cy="321" rx="62" ry="12" stroke="#4b535c" strokeWidth="8" transform="rotate(2 1836 321)" />
        <path d="M1806 268 1823 265 1864 267 1855 269V320L1806 317Z" fill="#c9cacb" />
        <path d="M1855 269 1864 267V312L1855 320Z" fill="#a3a4a6" />
        <path d="M1814 277h32v31h-32z" fill="#b9babb" />
        <path d="M1806 268 1823 265 1864 267" stroke="#5c5f63" strokeDasharray="5 3" strokeWidth="1.500" />
        <path d="M1855 269V320M1806 317l48 4" stroke="#5c5f63" strokeDasharray="8 3" />
        <g className="font-['Open_Sans',sans-serif] font-bold">
          <text x="1812" y="298" fontSize="11" fill="#4a4d52">FRONT</text>
          <text x="1857" y="296" fontSize="8" fill="#4a4d52">E</text>
          <text x="1775" y="319" fontSize="9" fill="#d5d8da">W</text>
          <text x="1812" y="338" fontSize="11" fill="#d5d8da">S</text>
          <text x="1893" y="326" fontSize="10" fill="#d5d8da">E</text>
        </g>
      </svg>
      <button className="mt-[36px] flex h-[18px] w-[68px] items-center justify-between rounded-sm border border-[#9fa2ac] bg-[#8d909b] px-1 text-[9px] text-[#333844]">
        Unnamed
        <Svg size="size-2" box="0 0 8 8"><path d="M0 2h8L4 6z" stroke="#a7aab4" /></Svg>
      </button>
    </div>
  );
}

function NavBar() {
  return (
    <div className="absolute right-px top-[210px] h-[212px] w-8 rounded-sm bg-[#565c66]">
      <svg viewBox="0 0 32 212" className="h-full w-full" fill="none" stroke="#3c424b" strokeWidth="1.300" aria-label="Navigation tools">
        <circle cx="26" cy="5" r="3" />
        <path d="M11 19h10l6 6v10l-6 6H11l-6-6V25z" /><circle cx="16" cy="30" r="6" />
        <path d="M8 75c-4-5-1-8 2-4V64c0-3 3-3 3 0v-2c0-3 3-3 3 0v2c0-3 3-3 3 0v3c1-2 4-2 4 1 0 5 0 8-3 12 -3 3-8 3-12-5z" />
        <path d="m5 90 16 16M5 105 19 91M4 93v-4h4M16 89h4v4" /><circle cx="21" cy="105" r="5" /><path d="m24 109 4 4" />
        <path d="M16 130v26M12 134l4-5 4 5M6 142c6-5 22-4 22 0s-14 6-20 2" />
        <path d="M5 170h6v6H5zM13 170h6v6h-6zM21 170h6v6h-6zM5 179h16v13H5z" />
        <path d="m10 182 6 3.500-6 3.500zM14 50h4l-2 2zM14 120h4l-2 2zM14 158h4l-2 2z" fill="#3c424b" />
        <circle cx="26" cy="206" r="3" />
      </svg>
    </div>
  );
}

function CommandLine() {
  return (
    <div className="absolute right-2.5 -bottom-1 left-[13px] z-10 flex h-[34px] rounded-sm border-b border-[#8b8b8b] bg-linear-to-r from-[#c3c3c4]/0 via-[#c3c3c4]/95 via-[70px] to-[#c3c3c4]/95">
      <div className="flex w-[69px] items-center gap-3 bg-linear-to-b from-[#77797b]/75 to-[#4e5052]/90 pl-1 text-[#d8d8d8] [clip-path:polygon(0_0,62px_0,100%_40%,100%_100%,0_100%)]">
        <Svg size="h-5 w-2" box="0 0 8 20"><path d="M2 1v18M6 1v18" stroke="#b9b9b9" strokeWidth="2" strokeDasharray="2 2" /></Svg>
        <button aria-label="Close command line" className="-ml-1"><Svg size="size-2.5" box="0 0 10 10"><path d="m1 1 8 8M9 1 1 9" stroke="#ddd" strokeWidth="2" /></Svg></button>
        <button aria-label="Customize"><Wrench className="size-4 -scale-x-100 fill-[#ccc] text-[#ccc]" /></button>
      </div>
      <label htmlFor="command" className="flex items-center gap-1 pl-[5px] text-[#777]">
        <Svg size="size-5" box="0 0 20 20"><path d="M1 1h18v18H1z" fill="#a9aaad" stroke="#8c8e92" strokeWidth="1.500" /><path d="m4 6 5 4-5 4M10 15h6" stroke="#f1f1f1" strokeWidth="1.600" /></Svg>
        <Down className="h-1 w-1.5" />
      </label>
      <input id="command" placeholder="Type a command" className="min-w-0 flex-1 bg-transparent pl-2.5 font-['DejaVu_Sans_Mono',monospace] text-lg italic placeholder:text-[#7a7a7a]" />
      <button aria-label="Command history" className="mr-1.5 text-black"><Down className="h-[5px] w-2.5 rotate-180" /></button>
    </div>
  );
}

function Canvas() {
  return (
    <main className="relative min-h-[640px] flex-1 border-t-2 border-l-2 border-[#8d9195] bg-[#20272f]">
      <Drawing />
      <p className="absolute left-1 top-1 text-[11px] leading-4 text-[#e3e6e8]">[−][Custom View][2D Wireframe]</p>
      <ViewCube />
      <NavBar />
      <Tooltip />
      <Watermark />
      <CommandLine />
    </main>
  );
}

function LayoutTabs() {
  const arrows = ["M1 1v8M9 1v8L3 5z", "M7 1v8L2 5z", "M3 1v8l5-4z", "M9 1v8M1 1v8l6-4z"];
  return (
    <div className="flex h-[21px] items-stretch border-b-2 border-black bg-[#f0f0f0] pl-1 font-['Liberation_Sans',sans-serif] text-[13px] text-[#111]">
      {arrows.map((d) => (
        <button key={d} aria-label="Scroll layouts" className="flex w-[19px] items-center justify-center border-r border-[#bbb] bg-white">
          <svg viewBox="0 0 10 10" className="size-2.5 fill-[#444] stroke-[#444]"><path d={d} /></svg>
        </button>
      ))}
      <button className="w-[66px] bg-[#1c232b] text-white [clip-path:polygon(0_0,100%_0,60px_100%,6px_100%)]">Model</button>
      <button className="px-1.5">Layout1</button>
      <span className="mx-1.5 w-px skew-x-[-20deg] bg-[#333]" />
      <button className="px-1">Layout2</button>
      <span className="mx-1.5 w-px skew-x-[-20deg] bg-[#333]" />
    </div>
  );
}

const toggles: [string, boolean][] = [
  ["INFER", false], ["SNAP", false], ["GRID", true], ["ORTHO", true], ["POLAR", false], ["OSNAP", true], ["3DOSNAP", false], ["OTRACK", false],
  ["DUCS", true], ["DYN", false], ["LWT", false], ["TPY", true], ["QP", false], ["SC", false], ["AM", false],
];

const cell = "flex h-full min-w-[22px] items-center justify-center border-l border-[#4c4c4c] bg-linear-to-b from-[#b9b9b9] to-[#9a9a9a]";
const person = "M8 2l2 2-1 3 5 7-3-1-3-3-3 3-3 1 5-7-1-3z";

function StatusBar() {
  return (
    <div className="flex h-[22px] items-center bg-linear-to-b from-[#9a9a9a] to-[#858585] font-['Liberation_Sans',sans-serif] text-[13px] text-[#111]">
      <output className="w-[202px] pl-3 text-xs">65.5888, 40.3171, 0.0000</output>
      {toggles.map(([label, on]) => (
        <button
          key={label}
          aria-pressed={on}
          className={on ? "h-full border-l border-[#4c4c4c] bg-linear-to-b from-[#cfe9ef] to-[#9fcbd7] px-[3px]" : "h-full border-l border-[#4c4c4c] bg-linear-to-b from-[#b9b9b9] to-[#9a9a9a] px-[3px]"}
        >
          {label}
        </button>
      ))}
      <span className="h-full w-px bg-[#4c4c4c]" />
      <div className="ml-auto flex h-full items-center">
        <button className={`${cell} px-[3px]`}>MODEL</button>
        <button aria-label="Layout view" className={cell}><Svg size="size-4" box="0 0 16 16"><path d="M2 1h12v10H2z" fill="#fff" stroke="#333" strokeWidth="1.300" /><path d="M6 4v5h5zM0 14h16" stroke="#333" strokeWidth="1.300" /></Svg></button>
        <button aria-label="Quick view drawings" className={cell}><Svg size="size-4" box="0 0 16 16"><path d="M1 1h6v8H1zM9 1h6v8H9z" fill="#fff" stroke="#333" strokeWidth="1.300" /><path d="M1 13h14" stroke="#333" strokeWidth="2" /></Svg></button>
        <span className="h-full w-3 border-l border-[#4c4c4c]" />
        <button className={`${cell} gap-1 px-[3px]`}><Svg size="size-4" box="0 0 16 16"><path d={person} fill="#eee" stroke="#333" /></Svg>1:1<Down className="h-1.5 w-2" /></button>
        <button aria-label="Annotation visibility" className={cell}><Svg size="size-4" box="0 0 16 16"><path d={person} fill="#eee" stroke="#333" /><path d="M12 6l1 3 3 1-3 1-1 3-1-3-3-1 3-1z" fill="#f2c14a" /></Svg></button>
        <button aria-label="Auto scale" className={cell}><Svg size="size-4" box="0 0 16 16"><path d={person} fill="#ccc" stroke="#777" /></Svg></button>
        <span className="h-full w-1.5 border-l border-[#4c4c4c]" />
        <button aria-label="Workspace switching" className={cell}><Settings className="size-[18px] fill-[#eee] text-[#222]" strokeWidth={1.500} /></button>
        <button aria-label="Toolbar lock" className={cell}><Svg size="size-4" box="0 0 16 16"><path d="M1 7h9v8H1zM8 7V3c0-3 6-3 6 0v2M5.500 10v3" stroke="#222" strokeWidth="1.500" fill="#eee" /></Svg></button>
        <button aria-label="Hardware acceleration" className={cell}><Svg size="size-4" box="0 0 16 16"><path d="M1 3h10v5H1z" fill="#ddd" stroke="#555" /><circle cx="12" cy="9" r="3.500" fill="#dbe9fb" stroke="#3b6dac" /><path d="M12 12v4" stroke="#3b6dac" strokeWidth="2" /></Svg></button>
        <button aria-label="Isolate objects" className="flex h-full w-[50px] items-center justify-center gap-2 border border-[#4c4c4c] border-t-[#5b3bb0] bg-[#a9a9a9]">
          <Svg size="size-4" box="0 0 16 16"><path d="M1 2h8l5 4H6z" fill="#3c6fb5" stroke="#1d3d70" /><path d="M1 6h9v8H1z" fill="#f0d03c" stroke="#7a6510" /><path d="m7 11 3 4 6-7" stroke="#2f9a2f" strokeWidth="2.500" /></Svg>
          <Svg size="size-4" box="0 0 16 16"><circle cx="8" cy="6" r="5" fill="#fff0a0" stroke="#b08f1c" /><path d="M6 11h4v4H6z" fill="#ddd" stroke="#777" /></Svg>
        </button>
        <button aria-label="Status menu" className="flex w-2.5 justify-center"><Down className="h-1 w-1.5" /></button>
        <button aria-label="Clean screen" className={cell}><Svg size="size-4" box="0 0 16 16"><path d="M1 2h14v12H1z" fill="#fff" stroke="#444" /><path d="M1 4h14" stroke="#444" strokeWidth="3" /></Svg></button>
      </div>
    </div>
  );
}

/* ---------- taskbar ---------- */

const apps: { name: string; open?: boolean; front?: boolean; art: React.ReactNode }[] = [
  { name: "Internet Explorer", art: <Svg box="0 0 40 40"><path d="M34 23H13c0 9 12 11 16 4h5c-3 8-9 10-14 10C11 37 6 31 6 23 6 14 12 8 20 8s15 6 14 15zM13 18h14c-1-7-13-7-14 0z" fill="#5cc4ee" stroke="#2a8fc8" /><path d="M4 38C-1 32 9 16 21 8c8-6 17-8 16 1 0-4-6-4-14 2C10 20 2 32 6 36c3 2 8-1 10-2C11 39 6 40 4 38z" fill="#f5c93a" /></Svg> },
  { name: "File Explorer", open: true, art: <Svg box="0 0 40 40"><path d="M4 4h8l2 3h12l1 3h9v26H4z" fill="#e9c860" /><path d="M7 6h6v3h7v3H7z" fill="#fff" /><path d="M4 12h33v26H4z" fill="#f5df8d" /><path d="M8 38V28q0-3 3-3h18q3 0 3 3v10h-5v-7H13v7z" fill="#7fbfe6" stroke="#4a92c4" /></Svg> },
  { name: "Firefox", art: <Svg box="0 0 40 40"><circle cx="21" cy="19" r="15" fill="#2f6fc0" /><path d="M14 6c6-4 13-3 17 2-5-1-8 0-9 3z" fill="#7fc4f0" /><path d="M4 9c1 3 2 4 4 4 4-1 7 0 9 3-3 1-4 3-3 5 2 5 8 6 13 2 4-3 5-9 4-13 8 6 8 18 1 25-8 7-20 5-25-2C3 27 2 17 4 9z" fill="#e8651a" /><path d="M31 10c8 8 6 20-3 25 4-7 5-16 3-25z" fill="#f8b336" /></Svg> },
  { name: "Player", art: <Svg box="0 0 40 40"><circle cx="21" cy="25" r="14" fill="url(#orange)" /><g fill="#f4a648"><circle cx="5" cy="9" r="3.500" /><circle cx="12" cy="5" r="3.500" /><circle cx="20" cy="3" r="3.500" /><circle cx="28" cy="5" r="3.500" /></g></Svg> },
  { name: "Store", art: <Svg box="0 0 40 40"><path d="M1 1h38v38H1z" fill="#128a12" /><path d="M7 13h26l-2 21H9z" fill="#fff" /><path d="M13 13c0-9 12-9 12 0" stroke="#fff" strokeWidth="2" /><path d="M14 19h5v5h-5zM21 19h6v5h-6zM14 26h5v5h-5zM21 26h6v5h-6z" fill="#128a12" /></Svg> },
  { name: "System utility", open: true, art: <Svg box="0 0 40 40"><circle cx="20" cy="20" r="18" fill="url(#lens)" stroke="#b8c0ca" strokeWidth="2" /><circle cx="20" cy="20" r="12" stroke="#5fb0ea" strokeWidth="3" strokeDasharray="20 5" /><circle cx="20" cy="20" r="6" fill="#3aa0e8" /><path d="M20 16v4M17.500 18a3.500 3.500 0 1 0 5 0" stroke="#fff" strokeWidth="1.300" /></Svg> },
  { name: "Photo viewer", open: true, art: <Svg box="0 0 40 40"><path d="M4 6h32v28H4z" fill="#fff" /><path d="M6 8h28v12H6z" fill="#5fa6dc" /><path d="M6 12c6-4 12 2 18-1s7-1 10 0v6H6z" fill="#cfe6f6" /><path d="M6 19c8-4 20-2 28-2v6H6z" fill="#3f6f58" /><path d="M6 22h28v10H6z" fill="#3f83b8" /><path d="M2 11V3h8M38 11V3h-8M2 29v8h8M38 29v8h-8" stroke="#5f9fd0" strokeWidth="2" strokeDasharray="3 2" /></Svg> },
  { name: "AutoCAD", open: true, front: true, art: <Svg box="0 0 40 40"><path d="M1 4h38v35H1z" fill="#191919" /><path d="M1 27h38v12H1z" fill="#c01015" /><path d="M24 10h4M30 10h4M24 15h4M31 16h4M27 20h6M30 24h6" stroke="#777" strokeWidth="2" /><path d="M4 33 13 4l6 1 10 21-7 3-2-5-9 3-1 8z" fill="#d8d8d8" stroke="#777" /><path d="m13 18 2-7 4 6z" fill="#3a3a3a" /></Svg> },
];

function Taskbar() {
  return (
    <footer className="flex h-11 items-center bg-linear-to-r from-[#45566f] via-[#475f88] to-[#445269] text-white">
      <button aria-label="Start" className="flex w-[57px] justify-center">
        <Svg size="size-9" box="0 0 36 36"><path d="m2 6 14-2v14H2zM17 4l17-3v17H17zM2 19h14v13L2 30zM17 19h17v16l-17-3z" fill="#fff" /></Svg>
      </button>
      <div className="ml-[5px] flex h-full flex-1 gap-[5px]">
        {apps.map((a) => (
          <button
            key={a.name}
            aria-label={a.name}
            className={
              a.front
                ? "flex w-[68px] items-center justify-center border border-[#b9c4d3] bg-[#8592a6]"
                : a.open
                  ? "flex w-[68px] items-center justify-center border border-[#77879f] bg-[#5a6b86]"
                  : "flex w-[68px] items-center justify-center"
            }
          >
            {a.art}
          </button>
        ))}
      </div>
      <div className="flex items-center gap-4 pr-4">
        <Down className="mr-1 h-[5px] w-2.5 rotate-180" />
        <Svg size="h-5 w-[18px]" box="0 0 18 20"><path d="M1 1v18" stroke="#fff" strokeWidth="2" /><path d="M2 2c4-1 6 2 8 1v7c-3 1-5-2-8-1zM10 5c3 1 4 2 7 0-1 6-3 7-7 5z" fill="#fff" /></Svg>
        <Svg size="h-5 w-3" box="0 0 12 20"><path d="M4 0h4v3H4z" fill="#fff" /><path d="M1 3h10v16H1z" stroke="#fff" strokeWidth="1.500" /><path d="M3 5h6v12H3z" fill="#fff" /></Svg>
        <Svg size="size-4" box="0 0 16 16"><path d="M1 16v-3M4.500 16v-5M8 16V8M11.500 16V5M15 16V1" stroke="#fff" strokeWidth="2" /></Svg>
        <Svg size="h-5 w-[18px]" box="0 0 18 20"><path d="M1 7h3l5-6v18l-5-6H1z" fill="#fff" /><path d="M12 6c2 2 2 6 0 8" stroke="#fff" strokeWidth="1.200" /></Svg>
        <time className="ml-1 pt-1.5 text-center text-sm leading-[22px]">01:03<br />4.6.2014</time>
      </div>
    </footer>
  );
}

export default function App() {
  return (
    <div className="flex h-screen min-w-[1280px] flex-col overflow-hidden bg-[#666] font-['Open_Sans','Noto_Sans',sans-serif]">
      <SharedGradients />
      <TitleBar />
      <MenuBar />
      <TabBar />
      <Ribbon />
      <div className="h-[6px] shrink-0 border-t border-white bg-[#666]" />
      <Canvas />
      <LayoutTabs />
      <StatusBar />
      <Taskbar />
    </div>
  );
}
